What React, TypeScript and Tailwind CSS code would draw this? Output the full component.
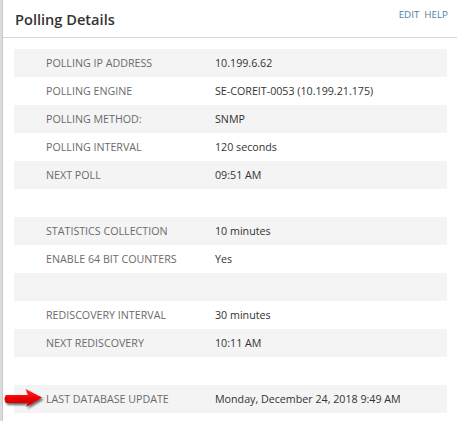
import React from "react";

type Row = { label?: string; value?: string; gray: boolean; arrow?: boolean };

const rows: Row[] = [
  { label: "POLLING IP ADDRESS", value: "10.199.6.62", gray: true },
  { label: "POLLING ENGINE", value: "SE-COREIT-0053 (10.199.21.175)", gray: false },
  { label: "POLLING METHOD:", value: "SNMP", gray: true },
  { label: "POLLING INTERVAL", value: "120 seconds", gray: false },
  { label: "NEXT POLL", value: "09:51 AM", gray: true },
  { gray: false },
  { label: "STATISTICS COLLECTION", value: "10 minutes", gray: true },
  { label: "ENABLE 64 BIT COUNTERS", value: "Yes", gray: false },
  { gray: true },
  { label: "REDISCOVERY INTERVAL", value: "30 minutes", gray: false },
  { label: "NEXT REDISCOVERY", value: "10:11 AM", gray: true },
  { gray: false },
  { label: "LAST DATABASE UPDATE", value: "Monday, December 24, 2018 9:49 AM", gray: true, arrow: true },
];

function Arrow() {
  return (
    <svg className="absolute left-0 top-0" width="46" height="28" viewBox="0 0 46 28">
      <defs>
        <filter id="sh" x="-20%" y="-40%" width="150%" height="190%">
          <feDropShadow dx="1.5" dy="2" stdDeviation="1.3" floodColor="#000" floodOpacity="0.6" />
        </filter>
        <linearGradient id="rg" x1="0" y1="0" x2="0" y2="1">
          <stop offset="0" stopColor="#ff2a2a" />
          <stop offset="0.5" stopColor="#ee0000" />
          <stop offset="1" stopColor="#c40000" />
        </linearGradient>
      </defs>
      <path
        d="M3 10 L25 10 L22.5 4 L39 12.5 L23 22 L25 18 L3 18 Q0 14 3 10 Z"
        fill="url(#rg)"
        filter="url(#sh)"
      />
    </svg>
  );
}

export default function App() {
  return (
    <div
      className="w-[457px] h-[421px] bg-white flex overflow-hidden"
      style={{ fontFamily: '"Open Sans", sans-serif' }}
    >
      <div className="w-[3px] bg-[#dcdcdc] border-r border-[#c8c8c8] shrink-0" />
      <div className="flex-1 flex flex-col">
        <div className="h-[38px] border-b border-[#d6d6d6] flex items-start justify-between pl-[12px] pr-[9px]">
          <div className="text-[14.6px] font-semibold text-[#333] mt-[9px] leading-[20px]">Polling Details</div>
          <div className="text-[9.8px] text-[#4e7fa0] mt-[8px] leading-[13px] flex gap-[5px]">
            <span>EDIT</span>
            <span>HELP</span>
          </div>
        </div>
        <div className="pt-[11px] flex flex-col">
          {rows.map((r, i) => (
            <div key={i} className="relative h-[28px] pl-[11px] pr-[10px]">
              <div
                className={
                  "h-full flex items-center text-[10.7px] " +
                  (r.gray ? "bg-[#f4f4f4]" : "bg-white")
                }
              >
                <div className="w-[201px] pl-[32px] text-[#6b6b6b] whitespace-nowrap">{r.label}</div>
                <div className="text-[#333] whitespace-nowrap">{r.value}</div>
              </div>
              {r.arrow && <Arrow />}
            </div>
          ))}
        </div>
      </div>
    </div>
  );
}
